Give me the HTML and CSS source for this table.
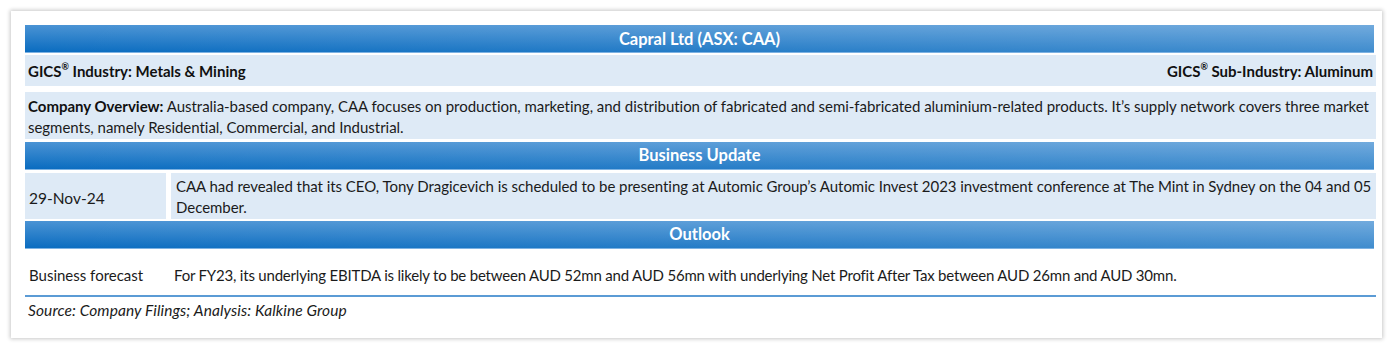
FILE: index.html
```html
<!DOCTYPE html>
<html lang="en">
<head>
<meta charset="utf-8">
<title>Capral Ltd (ASX: CAA)</title>
<link rel="stylesheet" href="styles.css">
</head>
<body>
<div class="card">
  <div class="head">Capral Ltd (ASX: CAA)</div>
  <div class="row gics">
    <span class="strong">GICS<sup>®</sup> Industry: Metals &amp; Mining</span>
    <span class="strong">GICS<sup>®</sup> Sub-Industry: Aluminum</span>
  </div>
  <p class="row overview"><span class="strong">Company Overview:</span> Australia-based company, CAA focuses on production, marketing, and distribution of fabricated and semi-fabricated aluminium-related products. It’s supply network covers three market segments, namely Residential, Commercial, and Industrial.</p>
  <div class="head head-sm">Business Update</div>
  <div class="update">
    <div class="date">29-Nov-24</div>
    <div class="detail">CAA had revealed that its CEO, Tony Dragicevich is scheduled to be presenting at Automic Group’s Automic Invest 2023 investment conference at The Mint in Sydney on the 04 and 05 December.</div>
  </div>
  <div class="head head-sm">Outlook</div>
  <div class="forecast">
    <div class="label">Business forecast</div>
    <div class="text">For FY23, its underlying EBITDA is likely to be between AUD 52mn and AUD 56mn with underlying Net Profit After Tax between AUD 26mn and AUD 30mn.</div>
  </div>
  <div class="source">Source: Company Filings; Analysis: Kalkine Group</div>
</div>
</body>
</html>
```
FILE: styles.css
```css
* { box-sizing: border-box; }
html, body { margin: 0; padding: 0; background: #ffffff; }
body {
  font-family: Lato, "Open Sans", sans-serif;
  font-size: 15px;
  letter-spacing: -0.2px;
  color: #1b1b1b;
  padding: 11px 11px;
}
.card {
  width: 1371px;
  height: 327px;
  background: #ffffff;
  box-shadow: 0 0 4px 1px rgba(0,0,0,0.22);
  padding: 14px 6px 0 14px;
}
.strong { font-weight: 700; letter-spacing: 0; color: #111; }
.head {
  margin-right: 2px;
  height: 28px;
  line-height: 28px;
  text-align: center;
  color: #ffffff;
  font-weight: 700;
  font-size: 16.5px;
  letter-spacing: 0;
  background:
    linear-gradient(to right, rgba(255,255,255,0), rgba(255,255,255,0.22)),
    linear-gradient(to bottom, #4a93d4, #0a6cc0);
  border-bottom: 1px solid #7db2e2;
}
.head-sm { height: 28px; line-height: 27px; }
.row {
  background: #deeaf6;
  padding: 0 3px;
}
.gics {
  margin-top: 2px;
  height: 31px;
  display: flex;
  justify-content: space-between;
  align-items: center;
  padding-top: 1px;
}
sup { font-size: 0.6em; line-height: 0; position: relative; top: -0.1em; vertical-align: super; }
.overview {
  margin: 6px 0 3px 0;
  height: 47px;
  line-height: 21px;
  padding-top: 4px;
  letter-spacing: -0.03px;
}
.update {
  margin-top: 3px;
  height: 46px;
  display: flex;
  gap: 5px;
  margin-bottom: 2px;
}
.date {
  width: 141px;
  background: #deeaf6;
  display: flex;
  align-items: center;
  padding: 4px 0 0 4px;
  font-size: 15.5px;
  letter-spacing: 0;
}
.detail {
  flex: 1;
  background: #deeaf6;
  line-height: 21px;
  padding: 3px 4px 0 5px;
  letter-spacing: -0.04px;
}
.forecast {
  height: 48px;
  display: flex;
  align-items: center;
  padding-top: 5px;
  border-bottom: 2px solid #5b9bd5;
}
.forecast .label { width: 149px; padding-left: 4px; letter-spacing: 0; }
.forecast .text { flex: 1; }
.source {
  font-style: italic;
  font-size: 15.5px;
  padding: 3px 0 0 3px;
  line-height: 20px;
  letter-spacing: 0.1px;
}
```
